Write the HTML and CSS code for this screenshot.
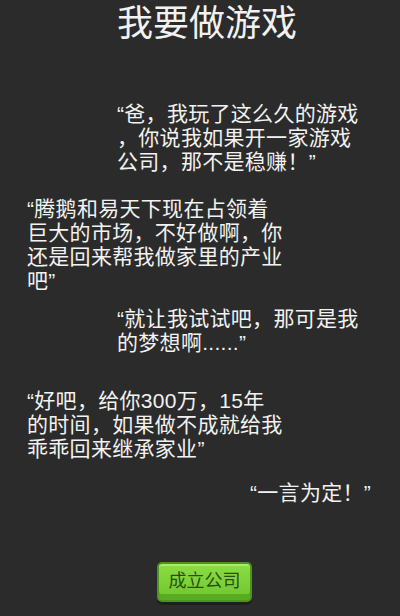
FILE: index.html
```html
<!DOCTYPE html>
<html lang="zh-CN">
<head>
<meta charset="utf-8">
<title>我要做游戏</title>
<link rel="stylesheet" href="styles.css">
</head>
<body>
<div class="page">
  <h1 class="title">我要做游戏</h1>
  <p class="line me b1">“爸，我玩了这么久的游戏<br>，你说我如果开一家游戏<br>公司，那不是稳赚！”</p>
  <p class="line dad b2">“腾鹅和易天下现在占领着<br>巨大的市场，不好做啊，你<br>还是回来帮我做家里的产业<br>吧”</p>
  <p class="line me b3">“就让我试试吧，那可是我<br>的梦想啊......”</p>
  <p class="line dad b4">“好吧，给你300万，15年<br>的时间，如果做不成就给我<br>乖乖回来继承家业”</p>
  <p class="line last b5">“一言为定！”</p>
  <div class="actions">
    <button class="start">成立公司</button>
  </div>
</div>
</body>
</html>
```

FILE: styles.css
```css
html, body {
  margin: 0;
  padding: 0;
  background: #2b2b2b;
}
.page {
  width: 400px;
  height: 616px;
  display: flex;
  flex-direction: column;
  font-family: "Liberation Sans", "Noto Sans CJK SC", sans-serif;
  color: #f2f2f2;
  overflow: hidden;
}
.title {
  margin: 4px 0 0 14px;
  text-align: center;
  font-size: 36px;
  font-weight: normal;
  line-height: 40px;
}
.line {
  margin: 0;
  font-size: 21px;
  line-height: 24px;
  letter-spacing: 0.3px;
}
.me { margin-left: 117px; }
.dad { margin-left: 27px; }
.last { margin-left: 250px; }
.b1 { margin-top: 58px; }
.b2 { margin-top: 23px; }
.b3 { margin-top: 14px; }
.b4 { margin-top: 34px; }
.b5 { margin-top: 20px; }
.actions {
  display: flex;
  justify-content: center;
  margin-top: 57px;
  padding-left: 9px;
}
.start {
  width: 95px;
  height: 40px;
  padding: 0 0 6px 0;
  border: 2px solid #4c951c;
  border-radius: 5px;
  background: linear-gradient(#8bdc45, #6fc62d);
  box-shadow: inset 0 2px 0 #a8ec6a, inset 0 -6px 0 #5aab24, 0 3px 0 #1f1f1f;
  color: #274f0c;
  font-family: "Noto Sans CJK SC", sans-serif;
  font-size: 18px;
  line-height: 20px;
}
```
